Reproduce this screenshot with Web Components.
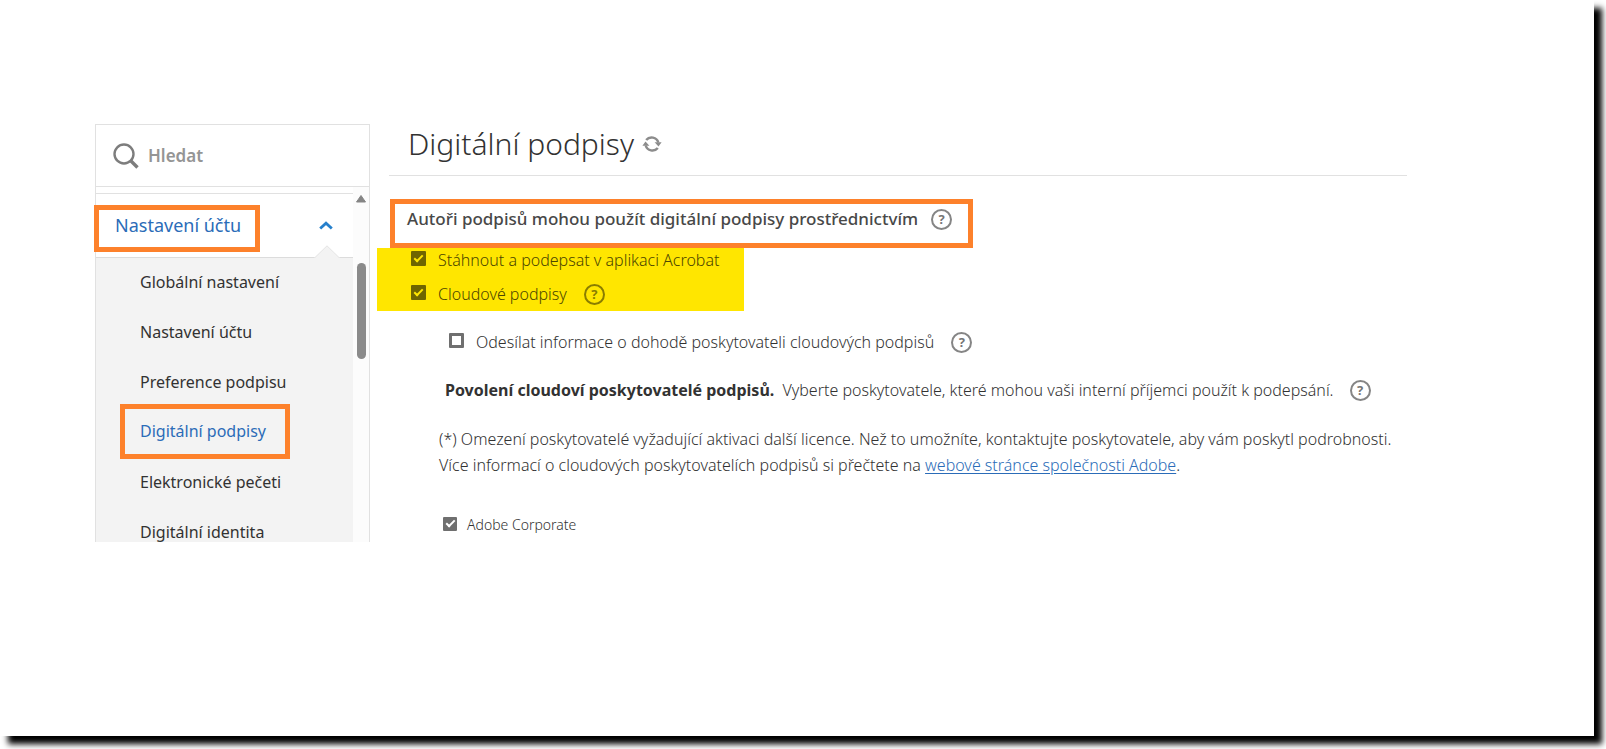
<!DOCTYPE html>
<html lang="cs">
<head>
<meta charset="utf-8">
<meta name="viewport" content="width=device-width, initial-scale=1">
<title>Digitální podpisy</title>
<style>
html {
	background: #fff;
}

body {
	margin: 0;
	font: 16px/24px "Noto Sans", "Open Sans", sans-serif;
	color: #323232;
	--orange: #fd812b;
	--blue: #2b6cb8;
	--line: #e1e1e1;
}
</style>
</head>
<body>
<account-page>
	<side-nav slot="nav" heading="Nastavení účtu">
		<nav-item>Globální nastavení</nav-item>
		<nav-item>Nastavení účtu</nav-item>
		<nav-item>Preference podpisu</nav-item>
		<nav-item current>Digitální podpisy</nav-item>
		<nav-item>Elektronické pečeti</nav-item>
		<nav-item>Digitální identita</nav-item>
	</side-nav>
	<signature-settings></signature-settings>
</account-page>

<script>
const attach = (element, html) => {
	const template = document.createElement('template');
	template.innerHTML = html;
	element.attachShadow({mode: 'open'}).appendChild(template.content.cloneNode(true));
}

class AccountPage extends HTMLElement {
	constructor() {
		super();
		attach(this, `
<style>
:host {
	display: flex;
	box-sizing: border-box;
	min-height: 100vh;
	padding: 0 12px 13px 0;
	overflow: hidden;
}

#sheet {
	flex: 1;
	display: grid;
	grid-template-columns: 275px minmax(0, 1fr);
	align-items: start;
	gap: 7px;
	padding: 124px 187px 48px 95px;
	background: #fff;
	box-shadow: 8px 8px 6px #000;
}
</style>

<div id="sheet">
	<slot name="nav"></slot>
	<slot></slot>
</div>
`);
	}
}
customElements.define('account-page', AccountPage);

class SideNav extends HTMLElement {
	constructor() {
		super();
		attach(this, `
<style>
:host {
	display: block;
	box-sizing: border-box;
	border: 1px solid var(--line);
	border-bottom: 0;
}

#search {
	display: flex;
	align-items: center;
	gap: 9px;
	height: 61px;
	padding: 1px 0 0 17px;
	box-sizing: border-box;
	height: 62px;
	border-bottom: 1px solid var(--line);
}

#search svg {
	flex: none;
}

input {
	flex: 1;
	min-width: 0;
	padding: 0;
	border: 0;
	outline: 0;
	background: none;
	font: 600 17px/24px "Noto Sans", "Open Sans", sans-serif;
	color: #959595;
}

input::placeholder {
	color: #959595;
	opacity: 1;
}

#body {
	display: grid;
	grid-template-columns: minmax(0, 1fr) 16px;
	height: 355px;
	overflow-y: clip;
}

#menu {
	margin-top: 6px;
	border-top: 1px solid var(--line);
}

#toggle {
	position: relative;
	display: flex;
	align-items: center;
	justify-content: space-between;
	box-sizing: border-box;
	width: 100%;
	height: 64px;
	padding: 0 20px 0 0;
	border: 0;
	border-bottom: 1px solid #dcdcdc;
	background: none;
	font: 18px/24px "Noto Sans", "Open Sans", sans-serif;
	color: var(--blue);
	text-align: left;
}

#toggle span {
	box-sizing: border-box;
	height: 47px;
	margin: 6px 0 0 -2px;
	padding: 3px 14px 10px 16px;
	border: 5px solid var(--orange);
}

/* notch that points from the open group to its heading */
#notch {
	position: absolute;
	right: 13px;
	bottom: -1px;
}

ul {
	margin: 0;
	padding: 0;
	background: #f3f3f3;
	list-style: none;
}

#scroll {
	display: flex;
	flex-direction: column;
	align-items: center;
	background: #fcfcfc;
}

#scroll svg {
	margin-top: 8px;
}

#thumb {
	width: 9px;
	height: 96px;
	margin-top: 60px;
	border-radius: 5px;
	background: #8b8b8b;
}
</style>

<div id="search">
	<svg width="26" height="26" viewBox="0 0 26 26" fill="none" stroke="#7d7d7d">
		<circle cx="11" cy="11" r="9.5" stroke-width="2.4"/>
		<path d="M18 18l6.500 6.500" stroke-width="3.400"/>
	</svg>
	<input type="text" placeholder="Hledat" aria-label="Hledat">
</div>
<div id="body">
	<div id="menu">
		<button id="toggle" type="button" aria-expanded="true">
			<span></span>
			<svg width="14" height="9" viewBox="0 0 14 9" fill="none" stroke="#2680cc" stroke-width="2.800">
				<path d="M1.200 7.600L7 2.200l5.800 5.400"/>
			</svg>
			<svg id="notch" width="26" height="13" viewBox="0 0 26 13">
				<path d="M0 12.500h1L13 .8l12 11.700h1V13H0z" fill="#f3f3f3"/>
				<path d="M0 12.500h1L13 .8l12 11.700h1" fill="none" stroke="#e4e4e4"/>
			</svg>
		</button>
		<ul><slot></slot></ul>
	</div>
	<div id="scroll">
		<svg width="10" height="8" viewBox="0 0 10 8"><path d="M5 0.500L9.500 7H.5z" fill="#858585" stroke="#858585" stroke-linejoin="round"/></svg>
		<div id="thumb"></div>
	</div>
</div>
`);
	}

	connectedCallback() {
		this.shadowRoot.querySelector('#toggle span').textContent = this.getAttribute('heading');
	}
}
customElements.define('side-nav', SideNav);

class NavItem extends HTMLElement {
	constructor() {
		super();
		attach(this, `
<style>
:host {
	display: flex;
	align-items: center;
	box-sizing: border-box;
	height: 50px;
	padding: 0 0 3px 24px;
}

a {
	box-sizing: border-box;
	padding: 0 15px;
	border: 5px solid transparent;
	line-height: 24px;
	color: #323232;
	text-decoration: none;
	white-space: nowrap;
}

:host([current]) a {
	flex: none;
	height: 55px;
	padding: 10px 19px 11px 15px;
	border-color: var(--orange);
	color: var(--blue);
}
</style>

<a href="#"><slot></slot></a>
`);
	}

	connectedCallback() {
		this.setAttribute('role', 'listitem');
	}
}
customElements.define('nav-item', NavItem);

class HelpButton extends HTMLElement {
	constructor() {
		super();
		attach(this, `
<style>
:host {
	display: inline-flex;
	flex: none;
}

button {
	box-sizing: border-box;
	width: 21px;
	height: 21px;
	padding: 0;
	border: 2px solid var(--help, #858585);
	border-radius: 50%;
	background: none;
	font: 700 13px/17px "Noto Sans", "Open Sans", sans-serif;
	color: var(--help, #757575);
	text-align: center;
}
</style>

<button type="button">?</button>
`);
	}
}
customElements.define('help-button', HelpButton);

class CheckOption extends HTMLElement {
	constructor() {
		super();
		attach(this, `
<style>
:host {
	display: flex;
	align-items: center;
	gap: 17px;
	--box: 15px;
	--mark: #6f6f6f;
	--tick: #fff;
}

:host([small]) {
	--box: 14px;
	font-size: 14px;
}

label {
	display: flex;
	align-items: center;
	gap: var(--gap, 12px);
	font-weight: 300;
}

input {
	appearance: none;
	flex: none;
	display: grid;
	place-items: center;
	box-sizing: border-box;
	width: var(--box);
	height: var(--box);
	margin: 0 0 3px;
	border: 3px solid var(--mark);
	border-radius: 1px;
}

input:checked {
	background: var(--mark);
}

/* tick */
input:checked::after {
	content: "";
	width: 7px;
	height: 3px;
	margin-bottom: 3px;
	border: solid var(--tick);
	border-width: 0 0 2px 2px;
	transform: rotate(-45deg);
}

:host([marked]) {
	--mark: #6f6500;
	--tick: #ffe600;
	--help: #8a7d00;
}
</style>

<label><input type="checkbox"><span><slot></slot></span></label>
<slot name="help"></slot>
`);
	}

	connectedCallback() {
		this.shadowRoot.querySelector('input').checked = this.hasAttribute('checked');
	}
}
customElements.define('check-option', CheckOption);

class SignatureSettings extends HTMLElement {
	constructor() {
		super();
		attach(this, `
<style>
:host {
	display: block;
}

header {
	display: flex;
	align-items: center;
	gap: 8px;
	margin-left: 12px;
	padding: 0 0 11px 19px;
	border-bottom: 1px solid var(--line);
}

h1 {
	margin: 0;
	font-size: 30px;
	font-weight: 300;
	line-height: 40px;
}

#refresh {
	display: flex;
	padding: 0;
	border: 0;
	background: none;
}

h2 {
	display: flex;
	align-items: center;
	gap: 13px;
	box-sizing: border-box;
	width: fit-content;
	height: 49px;
	margin: 23px 0 0 13px;
	padding: 0 16px 9px 12px;
	border: 5px solid var(--orange);
	font-size: 17px;
	font-weight: 500;
	line-height: 24px;
	color: #484848;
}

#marked {
	display: grid;
	gap: 10px;
	box-sizing: border-box;
	width: 367px;
	padding: 0 0 5px 34px;
	background: #ffe600;
	color: #4d4600;
}

#send {
	margin: 19px 0 0 72px;
}

#providers {
	display: flex;
	align-items: center;
	gap: 16px;
	margin: 24px 0 0 68px;
}

p {
	margin: 0;
	font-weight: 300;
}

b {
	margin-right: 4px;
	font-weight: 700;
}

#licence {
	margin: 24px 0 0 62px;
	line-height: 26px;
}

a {
	color: var(--blue);
	text-underline-offset: 2px;
}

#corporate {
	margin: 35px 0 0 66px;
	--gap: 10px;
}
</style>

<header>
	<h1>Digitální podpisy</h1>
	<button id="refresh" type="button" aria-label="Obnovit">
		<svg width="20" height="18" viewBox="0 0 20 18">
			<path d="M4.200 5A7 7 0 0 1 16.300 7.500M15.800 13A7 7 0 0 1 3.700 10.500" fill="none" stroke="#8c8c8c" stroke-width="2.500"/>
			<path d="M12.600 7.200h7l-3.100 4.300zM7.400 10.800h-7l3.100-4.300z" fill="#8c8c8c"/>
		</svg>
	</button>
</header>
<h2>Autoři podpisů mohou použít digitální podpisy prostřednictvím <help-button></help-button></h2>
<div id="marked">
	<check-option checked marked>Stáhnout a podepsat v aplikaci Acrobat</check-option>
	<check-option checked marked>Cloudové podpisy<help-button slot="help"></help-button></check-option>
</div>
<check-option id="send">Odesílat informace o dohodě poskytovateli cloudových podpisů<help-button slot="help"></help-button></check-option>
<div id="providers">
	<p><b>Povolení cloudoví poskytovatelé podpisů.</b> Vyberte poskytovatele, které mohou vaši interní příjemci použít k podepsání.</p>
	<help-button></help-button>
</div>
<p id="licence">(*) Omezení poskytovatelé vyžadující aktivaci další licence. Než to umožníte, kontaktujte poskytovatele, aby vám poskytl podrobnosti.<br>Více informací o cloudových poskytovatelích podpisů si přečtete na <a href="#">webové stránce společnosti Adobe</a>.</p>
<check-option id="corporate" checked small>Adobe Corporate</check-option>
`);
	}
}
customElements.define('signature-settings', SignatureSettings);
</script>
</body>
</html>
